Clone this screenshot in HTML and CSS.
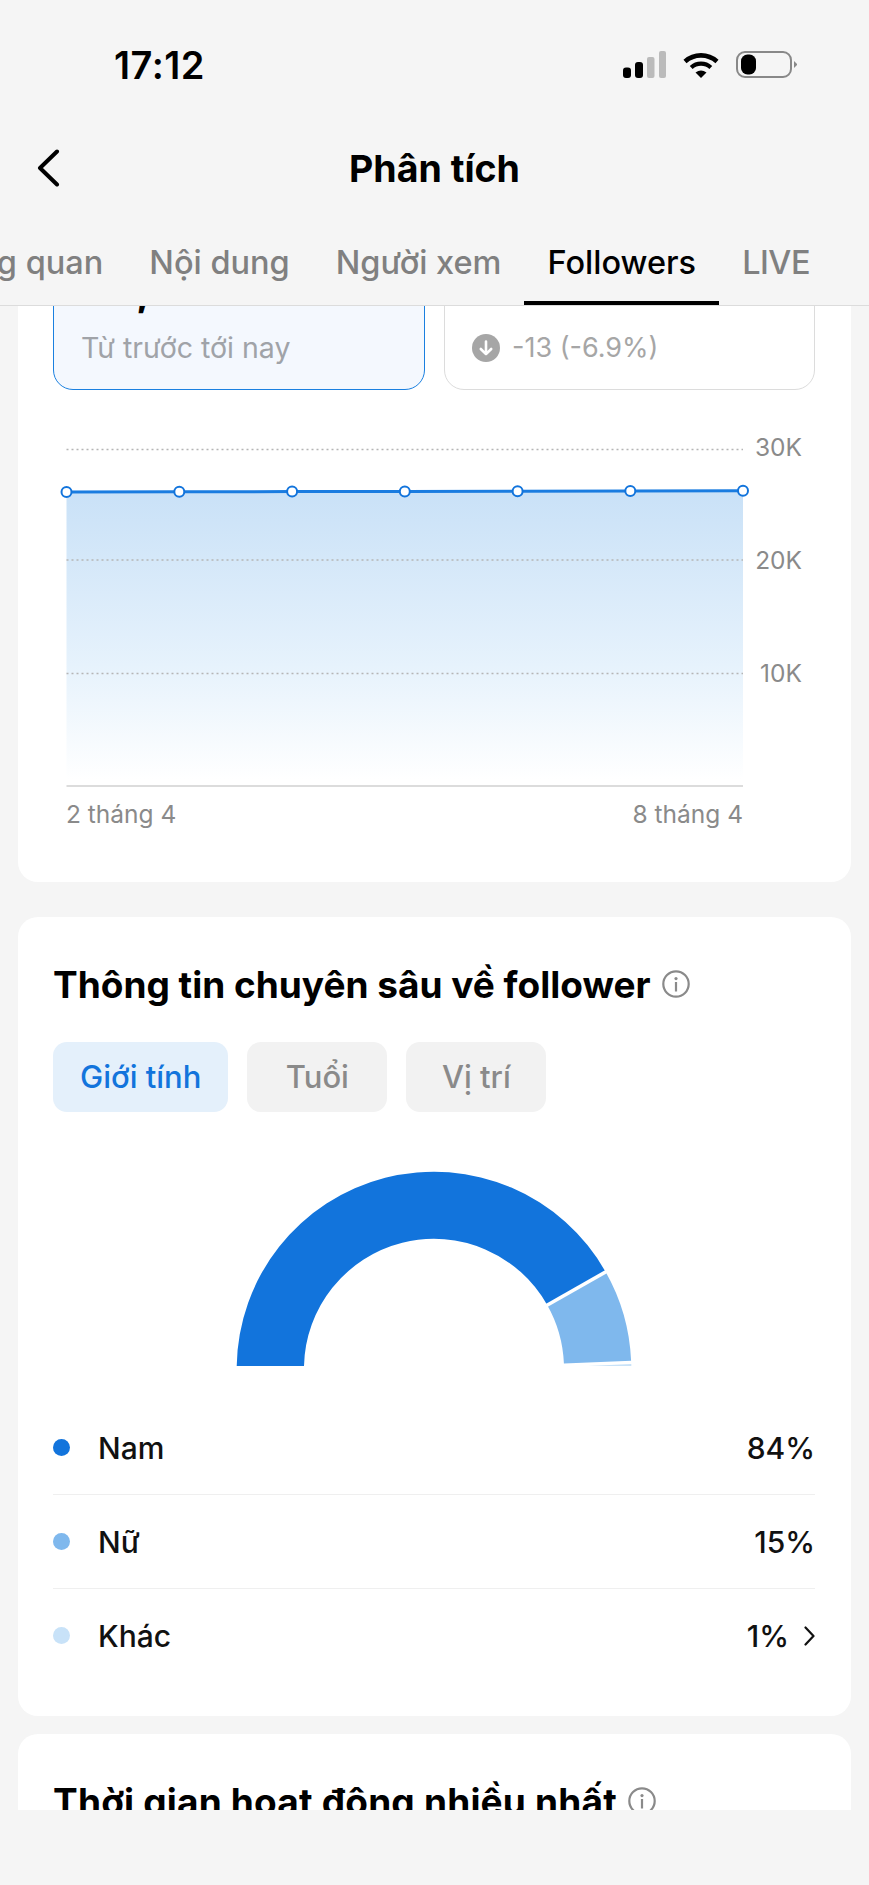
FILE: index.html
```html
<!DOCTYPE html>
<html lang="vi">
<head>
  <meta charset="UTF-8">
  <meta name="viewport" content="width=device-width, initial-scale=1.0">
  <title>Phân tích</title>
  <link rel="stylesheet" href="styles.css">
</head>
<body>
<div id="app">
  <!-- Status bar -->
  <div class="status-bar">
    <span class="time">17:12</span>
    <div class="status-icons">
      <svg class="signal" width="43" height="27" viewBox="0 0 43 27">
        <rect x="0" y="16.5" width="8" height="10.5" rx="3" fill="#000"/>
        <rect x="12" y="11" width="8" height="16" rx="3" fill="#000"/>
        <rect x="24" y="6" width="7.5" height="21" rx="2" fill="#bbb"/>
        <rect x="36" y="0" width="7" height="27" rx="2" fill="#bbb"/>
      </svg>
      <svg class="wifi" width="36" height="26" viewBox="0 0 36 26">
        <path d="M2 9.5A24 24 0 0 1 34 9.5" fill="none" stroke="#000" stroke-width="4.6"/>
        <path d="M8.2 15.5A14.5 14.5 0 0 1 27.8 15.5" fill="none" stroke="#000" stroke-width="4.2"/>
        <path d="M12.5 20.4Q18 16.6 23.5 20.4L18 26Z" fill="#000"/>
      </svg>
      <svg class="battery" width="61" height="27" viewBox="0 0 61 27">
        <rect x="1" y="1" width="54" height="25" rx="8" fill="none" stroke="#888" stroke-width="2"/>
        <rect x="5" y="3.5" width="15" height="20" rx="6.5" fill="#000"/>
        <path d="M58 10L61 13L61 14L58 17Z" fill="#888"/>
      </svg>
    </div>
  </div>

  <!-- Title -->
  <div class="nav-bar">
    <svg class="back" width="24" height="38" viewBox="0 0 24 38">
      <path d="M21 2.5L4 19L21 35.5" fill="none" stroke="#000" stroke-width="4" stroke-linecap="round" stroke-linejoin="round"/>
    </svg>
    <h1>Phân tích</h1>
  </div>

  <!-- Tabs -->
  <div class="tabs">
    <div class="tab">Tổng quan</div>
    <div class="tab">Nội dung</div>
    <div class="tab">Người xem</div>
    <div class="tab active">Followers</div>
    <div class="tab tab-live">LIVE</div>
  </div>

  <div class="scroll">
    <div class="scroll-inner">
      <!-- Overview card, scrolled under the tabs -->
      <div class="card card-overview">
        <div class="metrics">
          <div class="metric selected">
            <div class="metric-value">26,345</div>
            <div class="metric-note">Từ trước tới nay</div>
          </div>
          <div class="metric">
            <div class="metric-note">
              <svg class="down-icon" width="28" height="28" viewBox="0 0 28 28">
                <circle cx="14" cy="14" r="14" fill="#a6a6a6"/>
                <path d="M14 7.5V20M8.8 15L14 20.2L19.2 15" fill="none" stroke="#fff" stroke-width="2.6" stroke-linecap="round" stroke-linejoin="round"/>
              </svg>
              <span class="delta">-13 (-6.9%)</span>
            </div>
          </div>
        </div>

        <svg class="line-chart" width="761" height="410" viewBox="0 0 761 410">
          <defs>
            <linearGradient id="area-fill" x1="0" y1="0" x2="0" y2="1">
              <stop offset="0" stop-color="#c9e1f7"/>
              <stop offset="0.6" stop-color="#e6f2fc"/>
              <stop offset="1" stop-color="#ffffff"/>
            </linearGradient>
          </defs>
          <path d="M12.5 62L689 60.7V350H12.5Z" fill="url(#area-fill)"/>
          <line class="grid" x1="12.5" y1="19.5" x2="689" y2="19.5"/>
          <line class="grid" x1="12.5" y1="130" x2="689" y2="130"/>
          <line class="grid" x1="12.5" y1="243.5" x2="689" y2="243.5"/>
          <line class="axis" x1="12.5" y1="356" x2="689" y2="356"/>
          <path class="trend" d="M12.5 62L125.3 61.8L238.1 61.6L350.8 61.4L463.6 61.2L576.3 61L689 60.7"/>
          <circle class="point" cx="12.5" cy="62" r="5"/>
          <circle class="point" cx="125.3" cy="61.8" r="5"/>
          <circle class="point" cx="238.1" cy="61.6" r="5"/>
          <circle class="point" cx="350.8" cy="61.4" r="5"/>
          <circle class="point" cx="463.6" cy="61.2" r="5"/>
          <circle class="point" cx="576.3" cy="61" r="5"/>
          <circle class="point" cx="689" cy="60.7" r="5"/>
          <text class="chart-label" x="748" y="26" text-anchor="end">30K</text>
          <text class="chart-label" x="748" y="139" text-anchor="end">20K</text>
          <text class="chart-label" x="748" y="252" text-anchor="end">10K</text>
          <text class="chart-label" x="12" y="392.7">2 tháng 4</text>
          <text class="chart-label" x="689" y="392.7" text-anchor="end">8 tháng 4</text>
        </svg>
      </div>

      <!-- Follower insights -->
      <div class="card card-insights">
        <div class="card-title">
          <h2>Thông tin chuyên sâu về follower</h2>
          <svg class="info" width="28" height="28" viewBox="0 0 28 28">
            <circle cx="14" cy="14" r="12.7" fill="none" stroke="#8a8a8a" stroke-width="2.2"/>
            <circle cx="14" cy="8.6" r="1.6" fill="#8a8a8a"/>
            <rect x="12.9" y="12" width="2.2" height="9.5" fill="#8a8a8a"/>
          </svg>
        </div>
        <div class="chips">
          <div class="chip active">Giới tính</div>
          <div class="chip">Tuổi</div>
          <div class="chip">Vị trí</div>
        </div>
        <svg class="gauge" width="400" height="206" viewBox="0 0 400 206">
          <path fill="#c8e2f8" d="M354 206L397.3 204V206Z"/>
          <path fill="#7fb8ed" d="M371.7 111.9A197.3 197.3 0 0 1 397.1 200.7L329.9 203.6A130 130 0 0 0 313.2 145Z"/>
          <path fill="#1274dc" d="M2.7 206A197.3 197.3 0 0 1 371.7 111.9L313.2 145A130 130 0 0 0 70 206Z"/>
          <line x1="309" y1="147.4" x2="376" y2="109.4" stroke="#fff" stroke-width="3.5"/>
        </svg>
        <div class="legend">
          <div class="legend-row">
            <span class="dot dot-male"></span>
            <span class="legend-name">Nam</span>
            <span class="legend-value">84%</span>
          </div>
          <div class="legend-row">
            <span class="dot dot-female"></span>
            <span class="legend-name">Nữ</span>
            <span class="legend-value">15%</span>
          </div>
          <div class="legend-row">
            <span class="dot dot-other"></span>
            <span class="legend-name">Khác</span>
            <span class="legend-value">1%</span>
            <svg class="chevron" width="11" height="20" viewBox="0 0 11 20">
              <path d="M1.5 1.5L9.5 10L1.5 18.5" fill="none" stroke="#111" stroke-width="2.2" stroke-linecap="round" stroke-linejoin="round"/>
            </svg>
          </div>
        </div>
      </div>

      <!-- Most active times, cut off by the bottom of the view -->
      <div class="card card-active">
        <div class="card-title">
          <h2>Thời gian hoạt động nhiều nhất</h2>
          <svg class="info" width="28" height="28" viewBox="0 0 28 28">
            <circle cx="14" cy="14" r="12.7" fill="none" stroke="#8a8a8a" stroke-width="2.2"/>
            <circle cx="14" cy="8.6" r="1.6" fill="#8a8a8a"/>
            <rect x="12.9" y="12" width="2.2" height="9.5" fill="#8a8a8a"/>
          </svg>
        </div>
      </div>
    </div>
  </div>
</div>
</body>
</html>
```

FILE: styles.css
```css
body {
    margin: 0;
    background-color: #f5f5f5;
    font-family: Inter, "Liberation Sans", sans-serif;
    color: #000;
}

#app {
    width: 869px;
    height: 1885px;
    overflow: hidden;
    background-color: #f5f5f5;
}

/* Status bar */
.status-bar {
    height: 100px;
    display: flex;
    justify-content: space-between;
    padding: 0 72px 0 114px;
}

.time {
    margin-top: 43px;
    font-size: 38px;
    font-weight: 600;
    line-height: 44px;
    letter-spacing: 0.5px;
}

.status-icons {
    display: flex;
    align-items: flex-start;
    padding-top: 51px;
}

.signal {
    margin-right: 17px;
}

.wifi {
    margin-top: 1px;
    margin-right: 17px;
}

/* Title */
.nav-bar {
    height: 106px;
    display: flex;
    align-items: center;
    justify-content: center;
    position: relative;
}

.back {
    position: absolute;
    left: 36px;
    top: 49px;
}

h1 {
    margin: 0;
    padding-top: 30px;
    font-size: 37.5px;
    font-weight: 700;
}

/* Tabs */
.tabs {
    height: 99px;
    display: flex;
    justify-content: flex-end;
    padding-right: 36px;
    overflow: hidden;
    border-bottom: 1px solid #dcdcdc;
    box-sizing: content-box;
}

.tab {
    flex: none;
    padding: 0 23px;
    font-size: 32.5px;
    font-weight: 500;
    line-height: 114px;
    height: 99px;
    color: #808080;
    box-sizing: border-box;
}

.tab-live {
    letter-spacing: -0.5px;
}

.tab.active {
    color: #000;
    border-bottom: 4px solid #000;
}

/* Scrolling content */
.scroll {
    height: 1504px;
    overflow: hidden;
}

.scroll-inner {
    margin-top: -86px;
    padding: 0 18px;
}

.card {
    background: #fff;
    border-radius: 20px;
    padding: 0 36px;
}

.card-overview {
    padding-top: 30px;
    padding-bottom: 42px;
}

.metrics {
    display: grid;
    grid-template-columns: 371px 371px;
    gap: 19px;
}

.metric {
    height: 140px;
    padding: 0 27px 23px;
    display: flex;
    flex-direction: column;
    justify-content: flex-end;
    border: 1.5px solid #dcdcdc;
    border-radius: 20px;
    box-sizing: border-box;
}

.metric.selected {
    margin-left: -1px;
    background: #f4f8fe;
    border-color: #1a80e0;
}

.metric-value {
    font-size: 44px;
    font-weight: 700;
    line-height: 50px;
    margin-bottom: 16px;
}

.metric-note {
    display: flex;
    align-items: center;
    font-size: 28.5px;
    line-height: 36px;
    color: #a0a3a8;
}

.down-icon {
    margin-right: 12px;
}

.delta {
    font-size: 27px;
    color: #a6a6a6;
}

.line-chart {
    display: block;
    margin-top: 40px;
}

.grid {
    stroke: #b5b5b5;
    stroke-width: 1.5;
    stroke-dasharray: 2 3;
}

.axis {
    stroke: #dcdcdc;
    stroke-width: 2;
}

.trend {
    fill: none;
    stroke: #1a7ce0;
    stroke-width: 3;
}

.point {
    fill: #fff;
    stroke: #1274dc;
    stroke-width: 2;
}

.chart-label {
    font-size: 24.5px;
    fill: #8a8a8a;
}

/* Insights */
.card-insights {
    margin-top: 35px;
    padding: 46px 36px 34px 35px;
}

.card-title {
    display: flex;
    align-items: flex-start;
    height: 44px;
}

h2 {
    margin: 0;
    font-size: 37px;
    font-weight: 700;
    line-height: 44px;
    white-space: nowrap;
}

.info {
    flex: none;
    margin-left: 11px;
    margin-top: 7px;
}

.chips {
    display: flex;
    gap: 19px;
    margin-top: 35px;
}

.chip {
    min-width: 140px;
    height: 70px;
    padding: 0 27px;
    background: #f2f2f2;
    border-radius: 14px;
    font-size: 31px;
    font-weight: 500;
    line-height: 70px;
    text-align: center;
    color: #8a8a8a;
    box-sizing: border-box;
}

.chip.active {
    background: #e4f0fb;
    color: #1274dc;
}

.gauge {
    display: block;
    margin: 48px auto 0;
}

.legend {
    margin-top: 35px;
}

.legend-row {
    height: 93px;
    display: flex;
    align-items: center;
    border-bottom: 1px solid #efefef;
    font-size: 30px;
    font-weight: 500;
    color: #111;
    box-sizing: content-box;
}

.legend-row:last-child {
    border-bottom: none;
}

.dot {
    width: 17px;
    height: 17px;
    border-radius: 50%;
    margin-right: 28px;
}

.dot-male {
    background: #1274dc;
}

.dot-female {
    background: #7fb8ed;
}

.dot-other {
    background: #c8e2f8;
}

.legend-name {
    flex: 1;
}

.chevron {
    margin-left: 15px;
}

.card-active {
    margin-top: 18px;
    padding: 46px 36px 0 35px;
    height: 300px;
}

.card-active h2 {
    letter-spacing: 0.2px;
}
```
